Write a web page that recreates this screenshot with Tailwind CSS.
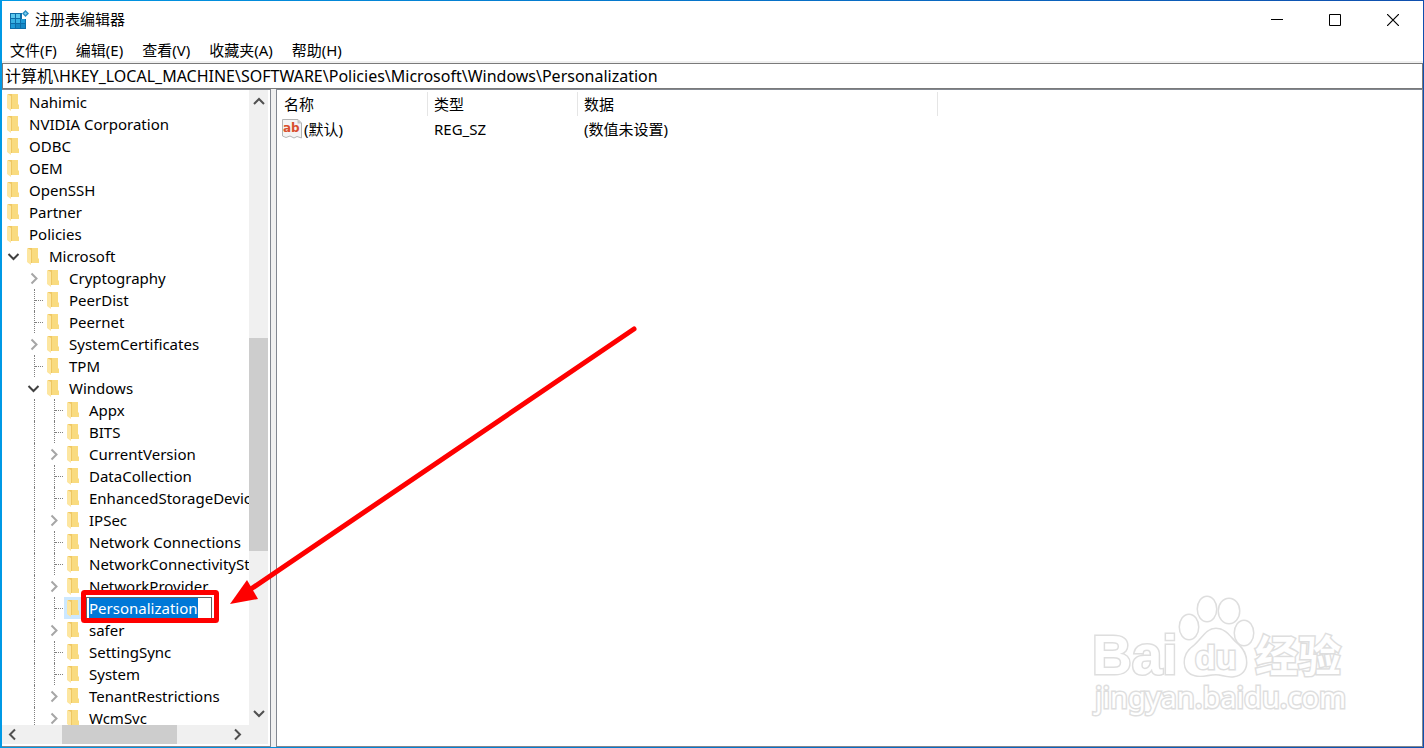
<!DOCTYPE html>
<html lang="zh-CN">
<head>
<meta charset="utf-8">
<title>注册表编辑器</title>
<script src="https://cdn.jsdelivr.net/npm/@tailwindcss/browser@4"></script>
</head>
<body class="bg-white">
<svg class="hidden" aria-hidden="true">
  <symbol id="folder" viewBox="0 0 12 17">
    <path d="M1 0H11V10L12 11V15H1Z" fill="#f9db7f"/>
    <path d="M1 0H5V15H1Z" fill="#efc763"/>
    <path d="M0 0L4 2V17L0 14Z" fill="#fde6a0"/>
  </symbol>
  <symbol id="right" viewBox="0 0 20 22"><path d="M7.500 6.500L12.500 11.500L7.500 16.500" fill="none" stroke="#a6a6a6" stroke-width="2"/></symbol>
  <symbol id="down" viewBox="0 0 20 22"><path d="M4.500 9L9.500 14L14.500 9" fill="none" stroke="#404040" stroke-width="2"/></symbol>
</svg>
<div class="relative flex h-screen flex-col overflow-hidden bg-linear-to-r from-[#0099e5] to-[#0f4fae] pt-px pr-px pb-px pl-0.5 font-['Noto_Sans','Noto_Sans_CJK_SC',sans-serif] text-[15px] leading-[22px] text-black">
  <header class="flex h-[37px] shrink-0 items-center bg-white pl-[7px] pr-px">
    <svg class="h-5 w-5" viewBox="0 0 20 20" aria-hidden="true">
      <path d="M1 3H13V9H17V19H1Z" fill="#0d6da8"/>
      <path d="M2 4H6V8H2ZM7 4H11V8H7Z" fill="#5cc8ee"/>
      <path d="M2 9H6V13H2ZM7 9H11V13H7Z" fill="#38b1e2"/>
      <path d="M12 9H16V13H12ZM2 14H6V18H2Z" fill="#1d9ad6"/>
      <path d="M7 14H11V18H7ZM12 14H16V18H12Z" fill="#1588c5"/>
      <path d="M16.500 0L20 3.500L16.500 7L13 3.500Z" fill="#2a8fc4"/><path d="M16.500 2L18 3.500L16.500 5L15 3.500Z" fill="#7fd2f2"/>
    </svg>
    <h1 class="grow pb-0.5 pl-[6px]">注册表编辑器</h1>
    <button class="flex h-full w-[58px] items-center justify-center" aria-label="最小化"><svg class="h-3 w-3" viewBox="0 0 12 12"><path d="M0 5.500H12" stroke="#000"/></svg></button>
    <button class="flex h-full w-[58px] items-center justify-center" aria-label="最大化"><svg class="h-3 w-3" viewBox="0 0 12 12"><path d="M.5.500H11.500V11.500H.5Z" fill="none" stroke="#000"/></svg></button>
    <button class="flex h-full w-[58px] items-center justify-center" aria-label="关闭"><svg class="h-3 w-3" viewBox="0 0 12 12"><path d="M0 0L12 12M12 0L0 12" stroke="#000" stroke-width="1.200"/></svg></button>
  </header>
  <nav class="flex h-[23px] shrink-0 items-center gap-[19px] bg-white pl-2">
    <button>文件(F)</button><button>编辑(E)</button><button>查看(V)</button><button>收藏夹(A)</button><button>帮助(H)</button>
  </nav>
  <div class="shrink-0 bg-[#f0f0f0] pt-0.5">
    <input aria-label="地址" class="block h-[26px] w-full border border-[#7a7a7a] bg-white px-[2px] pb-0.5 text-[16px] outline-none" value="计算机\HKEY_LOCAL_MACHINE\SOFTWARE\Policies\Microsoft\Windows\Personalization">
  </div>
  <main class="flex min-h-0 grow gap-[5px] bg-[#f0f0f0]">
    <section class="flex w-[269px] shrink-0 flex-col border border-l-0 border-[#828790] bg-white pr-0.5 pb-0.5">
      <div class="flex min-h-0 grow">
        <ul id="tree" class="min-w-0 grow overflow-hidden pt-px"></ul>
        <div class="flex w-[19px] shrink-0 flex-col items-center bg-[#f0f0f0]">
          <button class="h-[22px]" aria-label="向上滚动"><svg class="h-[22px] w-5" viewBox="0 0 20 22"><path d="M5 14L10 9L15 14" fill="none" stroke="#505050" stroke-width="2"/></svg></button>
          <div class="grow-[226]"></div>
          <div class="w-full grow-[212] bg-[#cdcdcd]"></div>
          <div class="grow-[152]"></div>
          <button class="h-[22px]" aria-label="向下滚动"><svg class="h-[22px] w-5" viewBox="0 0 20 22"><path d="M5 8L10 13L15 8" fill="none" stroke="#505050" stroke-width="2"/></svg></button>
        </div>
      </div>
      <div class="flex h-[19px] shrink-0 bg-[#f0f0f0]">
        <button class="w-5" aria-label="向左滚动"><svg class="h-[19px] w-5" viewBox="0 0 20 19"><path d="M13 4.500L8 9.500L13 14.500" fill="none" stroke="#505050" stroke-width="2"/></svg></button>
        <div class="w-10"></div>
        <div class="w-[115px] bg-[#cdcdcd]"></div>
        <div class="grow"></div>
        <button class="mr-[19px] w-5" aria-label="向右滚动"><svg class="h-[19px] w-5" viewBox="0 0 20 19"><path d="M6 4.500L11 9.500L6 14.500" fill="none" stroke="#505050" stroke-width="2"/></svg></button>
      </div>
    </section>
    <section class="min-w-0 grow border border-[#828790] bg-white pt-0.5">
      <table class="table-fixed border-separate border-spacing-0 text-left">
        <thead>
          <tr class="h-6">
            <th class="w-[151px] border-r border-[#e5e5e5] pl-[7px] font-normal">名称</th>
            <th class="w-[150px] border-r border-[#e5e5e5] pl-[6px] font-normal">类型</th>
            <th class="w-[360px] border-r border-[#e5e5e5] pl-[6px] font-normal">数据</th>
          </tr>
        </thead>
        <tbody>
          <tr class="h-[26px]">
            <td class="pl-[5px]"><span class="flex items-center gap-[2px]">
              <svg class="h-5 w-5" viewBox="0 0 20 20" aria-hidden="true"><path d="M.5.500H16L19.500 4V19L15 17.500L12 19L8 17L4 18.500L.5 17Z" fill="#f4f4f4" stroke="#b4b4b4"/><path d="M15.500.500V4.500H19.500Z" fill="#c4c4c4"/><text x="1" y="13" font-family="DejaVu Sans" font-weight="700" font-size="12" fill="#d8502f">ab</text></svg>
              (默认)</span></td>
            <td class="pl-[6px]">REG_SZ</td>
            <td class="pl-[6px]">(数值未设置)</td>
          </tr>
        </tbody>
      </table>
    </section>
  </main>

  <svg class="pointer-events-none absolute right-[76px] bottom-[26px] h-[130px] w-[258px] overflow-visible" viewBox="0 0 258 130" fill="#fff" stroke="#dedede" stroke-width="3" paint-order="stroke" aria-hidden="true">
    <ellipse cx="99" cy="35" rx="9" ry="12"/><ellipse cx="117" cy="17" rx="9" ry="12"/><ellipse cx="139" cy="19" rx="10" ry="12"/><ellipse cx="154" cy="41" rx="9" ry="12"/>
    <path d="M126 37C136 37 140 46 147 52C159 62 160 82 144 84C136 85 132 82 126 82C118 82 112 85 105 83C92 80 92 63 103 55C112 48 116 37 126 37Z"/>
    <text x="2" y="82" font-family="Liberation Sans" font-weight="700" font-size="55">Bai</text>
    <text x="105" y="77" font-family="Liberation Sans" font-weight="700" font-size="34">du</text>
    <text x="165" y="80" font-family="Noto Sans CJK SC" font-weight="700" font-size="43">经验</text>
    <text x="5" y="116" font-family="Noto Sans" font-size="29">jingyan.baidu.com</text>
  </svg>
  <svg class="pointer-events-none absolute top-0 left-0 h-[640px] w-[650px]" viewBox="0 0 650 640" aria-hidden="true">
    <rect x="83.500" y="592.500" width="133" height="28" rx="1" fill="none" stroke="#fe0000" stroke-width="5"/>
    <path d="M634 329L248 591" stroke="#fe0000" stroke-width="5" stroke-linecap="round"/>
    <path d="M230 604L247 580L258 599Z" fill="#fe0000"/>
  </svg>
</div>
<script>
  // [depth, name, expander]
  const keys = [
    [0,'Nahimic'],[0,'NVIDIA Corporation'],[0,'ODBC'],[0,'OEM'],[0,'OpenSSH'],[0,'Partner'],[0,'Policies'],
    [1,'Microsoft','down'],[2,'Cryptography','right'],[2,'PeerDist'],[2,'Peernet'],[2,'SystemCertificates','right'],[2,'TPM'],[2,'Windows','down'],
    [3,'Appx'],[3,'BITS'],[3,'CurrentVersion','right'],[3,'DataCollection'],[3,'EnhancedStorageDevices'],[3,'IPSec','right'],
    [3,'Network Connections'],[3,'NetworkConnectivityStatusIndicator'],[3,'NetworkProvider','right'],[3,'Personalization'],[3,'safer','right'],
    [3,'SettingSync'],[3,'System'],[3,'TenantRestrictions','right'],[3,'WcmSvc','right']
  ];
  const blank = '<span class="w-5 shrink-0"></span>';
  const line = '<span class="flex w-5 shrink-0 pl-[10px]"><span class="border-l border-dotted border-[#808080]"></span></span>';
  const branch = '<span class="flex w-5 shrink-0 pl-[10px]"><span class="border-l border-dotted border-[#808080]"></span><span class="mt-[11px] h-0 w-2 border-t border-dotted border-[#808080]"></span></span>';
  const icon = n => `<button class="w-5 shrink-0" aria-label="展开或折叠"><svg class="h-[22px] w-5"><use href="#${n}"/></svg></button>`;
  document.getElementById('tree').innerHTML = keys.map(([d, name, e]) => {
    const cells = (d > 1 ? blank : '') + (d > 2 ? line : '') + (d ? (e ? icon(e) : branch) : '');
    const edit = name === 'Personalization';
    const label = edit
      ? '<input id="rename" aria-label="重命名" class="h-[22px] w-[126px] shrink-0 border border-[#646464] bg-white pl-[2px] outline-none selection:bg-[#0078d7] selection:text-white" value="Personalization">'
      : `<span class="pl-[3px]">${name}</span>`;
    return `<li class="flex h-[22px] whitespace-nowrap pl-[2px]">${cells}<span class="flex w-[22px] shrink-0 items-start pt-[3px] pl-[3px] ${edit ? 'bg-[#cce8ff]' : ''}"><svg class="h-[17px] w-3"><use href="#folder"/></svg></span>${label}</li>`;
  }).join('');
  const rename = document.getElementById('rename');
  rename.focus({ preventScroll: true });
  rename.select();
</script>
</body>
</html>
